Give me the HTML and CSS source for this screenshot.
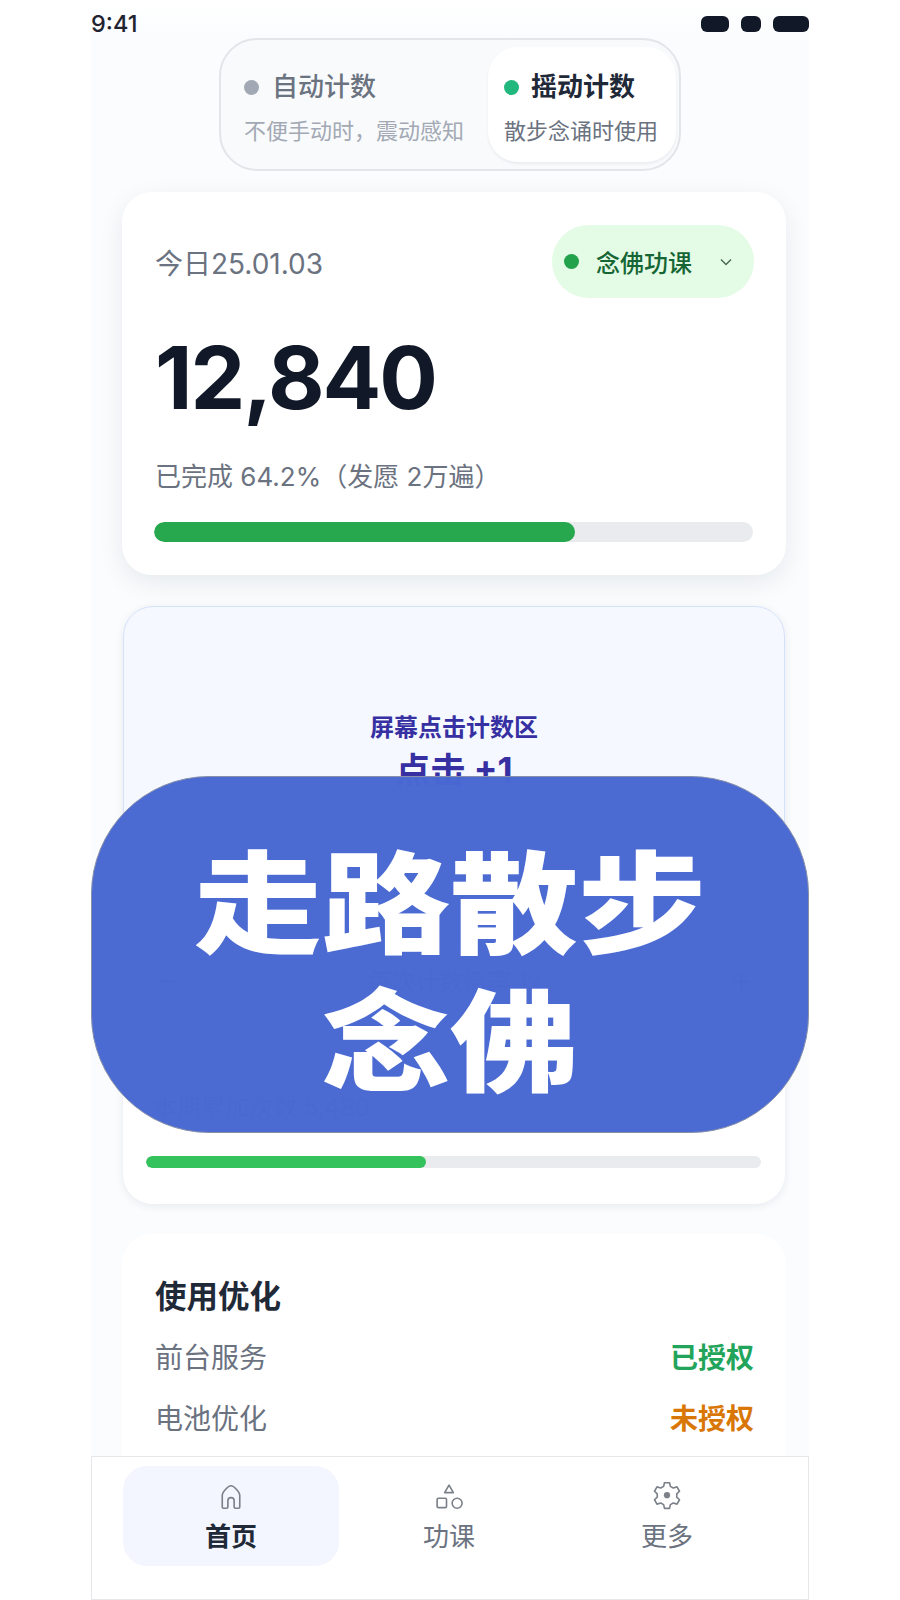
FILE: index.html
```html
<!DOCTYPE html>
<html lang="zh-CN">
<head>
    <meta charset="UTF-8">
    <meta name="viewport" content="width=device-width, initial-scale=1.0">
    <title>念佛计数</title>
    <link rel="stylesheet" href="styles.css">
</head>
<body>
    <div class="phone">

        <!-- Status bar -->
        <div class="status-bar">
            <span class="status-time">9:41</span>
            <div class="status-icons">
                <span class="status-block block-a"></span>
                <span class="status-block block-b"></span>
                <span class="status-block block-c"></span>
            </div>
        </div>

        <main class="content">
            <!-- Count mode switch -->
            <div class="mode-switch">
                <div class="mode-item">
                    <div class="mode-title"><span class="dot dot-grey"></span>自动计数</div>
                    <div class="mode-sub">不便手动时，震动感知</div>
                </div>
                <div class="mode-item mode-active">
                    <div class="mode-title"><span class="dot dot-teal"></span>摇动计数</div>
                    <div class="mode-sub">散步念诵时使用</div>
                </div>
            </div>

            <!-- Today -->
            <section class="card today-card">
                <div class="today-head">
                    <span class="today-date">今日25.01.03</span>
                    <div class="lesson-pill">
                        <span class="dot dot-green"></span>
                        <span class="lesson-name">念佛功课</span>
                        <svg class="chevron" viewBox="0 0 16 16"><path d="M3 5.5l5 5 5-5"/></svg>
                    </div>
                </div>
                <div class="today-count">12,840</div>
                <div class="today-note">已完成 64.2%（发愿 2万遍）</div>
                <div class="progress today-progress"><div class="progress-fill today-fill"></div></div>
            </section>

            <!-- Tap to count -->
            <section class="card tap-card">
                <div class="tap-zone">
                    <div class="tap-title">屏幕点击计数区</div>
                    <div class="tap-plus">点击 +1</div>
                </div>
                <div class="step-row">
                    <span class="step-btn">−</span>
                    <span class="step-label">每次计数倍率 1x</span>
                    <span class="step-btn">+</span>
                </div>
                <div class="tap-note">本期累加次数 5,480</div>
                <div class="progress tap-progress"><div class="progress-fill tap-fill"></div></div>
            </section>

            <!-- Permissions -->
            <section class="optimize">
                <h2 class="optimize-title">使用优化</h2>
                <div class="optimize-row"><span>前台服务</span><span class="state-ok">已授权</span></div>
                <div class="optimize-row"><span>电池优化</span><span class="state-no">未授权</span></div>
            </section>
        </main>

        <!-- Bottom tabs -->
        <nav class="tabbar">
            <div class="tab tab-active">
                <svg class="tab-icon" viewBox="0 0 24 24"><path d="M5 20V10.5C5 8.5 9.5 3 12 3s7 5.5 7 7.5V20c0 .6-.4 1-1 1h-2.5c-.6 0-1-.4-1-1v-5a2.5 2.5 0 0 0-5 0v5c0 .6-.4 1-1 1H6c-.6 0-1-.4-1-1z"/></svg>
                <span>首页</span>
            </div>
            <div class="tab">
                <svg class="tab-icon" viewBox="0 0 24 24"><path d="M12 2.5l3.5 6h-7z"/><rect x="2.500" y="13" width="7.500" height="7.500" rx="1"/><circle cx="18.500" cy="17" r="4"/></svg>
                <span>功课</span>
            </div>
            <div class="tab">
                <svg class="tab-icon" viewBox="0 2 24 24"><path d="M10 2.5h4l.7 3 2.3 1.3 3-.9 2 3.5-2.2 2.1v2.600l2.200 2.100-2 3.500-3-.9-2.300 1.300-.7 3h-4l-.7-3L7 18.800l-3 .9-2-3.500 2.200-2.100v-2.600L2 9.400l2-3.500 3 .9 2.300-1.300z"/><circle class="gear-dot" cx="12" cy="12.5" r="2.5"/></svg>
                <span>更多</span>
            </div>
        </nav>

        <!-- Caption over the page -->
        <div class="banner">
            <div class="banner-line">走路散步</div>
            <div class="banner-line">念佛</div>
        </div>
    </div>
</body>
</html>
```

FILE: styles.css
```css
* {
    box-sizing: border-box;
}
body {
    margin: 0;
    background-color: #fff;
    font-family: Inter, "Noto Sans CJK SC", sans-serif;
}
.phone {
    position: relative;
    width: 718px;
    height: 1600px;
    margin: 0 auto;
    background-color: #fafcfe;
    display: flex;
    flex-direction: column;
    overflow: hidden;
}

/* Status bar */
.status-bar {
    height: 38px;
    padding-top: 8px;
    display: flex;
    justify-content: space-between;
    align-items: flex-start;
    background: linear-gradient(#fff, #fafcfe);
}
.status-time {
    font-size: 23.5px;
    font-weight: 500;
    line-height: 32px;
    color: #1f2430;
}
.status-icons {
    display: flex;
    gap: 12px;
    padding-top: 8px;
}
.status-block {
    height: 16px;
    border-radius: 6px;
    background-color: #111827;
}
.block-a { width: 28px; }
.block-b { width: 20px; }
.block-c { width: 36px; }

.content {
    flex: 1;
    min-height: 0;
    padding: 0 0 0 31px;
    overflow: hidden;
}

/* Mode switch */
.mode-switch {
    width: 462px;
    height: 133px;
    margin: 0 0 21px 97px;
    padding: 7px 3px 7px 7px;
    display: flex;
    justify-content: space-between;
    background-color: #f8fafc;
    border: 2px solid #e3e5e9;
    border-radius: 38px;
}
.mode-item {
    padding: 24px 0 0 16px;
}
.mode-active {
    width: 188px;
    padding-left: 16px;
    background-color: #fff;
    border-radius: 30px;
    box-shadow: 0 2px 3px rgba(17, 24, 39, 0.06);
}
.mode-title {
    display: flex;
    align-items: center;
    gap: 13px;
    font-size: 26px;
    line-height: 32px;
    font-weight: 500;
    color: #6b7280;
}
.mode-active .mode-title {
    font-weight: 700;
    color: #1f2937;
    gap: 12px;
}
.mode-sub {
    margin-top: 13px;
    font-size: 22px;
    line-height: 30px;
    color: #a3a9b4;
    white-space: nowrap;
}
.mode-active .mode-sub {
    color: #6b7280;
}
.dot {
    width: 15px;
    height: 15px;
    border-radius: 50%;
    flex-shrink: 0;
}
.dot-grey { background-color: #a3a9b4; }
.dot-teal { background-color: #22b77c; }
.dot-green { background-color: #22a24a; }

/* Cards */
.card {
    width: 664px;
    background-color: #fff;
    border-radius: 30px;
}
.today-card {
    height: 383px;
    margin-bottom: 31px;
    padding: 33px 32px 0 33px;
    box-shadow: 0 8px 26px rgba(17, 24, 39, 0.08);
}
.today-head {
    display: flex;
    justify-content: space-between;
    align-items: center;
}
.today-date {
    font-size: 28px;
    color: #6b7280;
}
.lesson-pill {
    width: 202px;
    height: 73px;
    padding-left: 12px;
    display: flex;
    align-items: center;
    background-color: #e4fbe6;
    border-radius: 37px;
}
.lesson-name {
    margin-left: 17px;
    font-size: 24px;
    font-weight: 500;
    color: #166534;
}
.chevron {
    width: 16px;
    height: 16px;
    margin-left: 26px;
    fill: none;
    stroke: #4b6b57;
    stroke-width: 1.5;
}
.today-count {
    margin-top: 27px;
    font-size: 87px;
    line-height: 105px;
    font-weight: 700;
    letter-spacing: -2px;
    color: #111827;
}
.today-note {
    margin-top: 29px;
    font-size: 26px;
    line-height: 36px;
    color: #6b7280;
}
.progress {
    background-color: #e9ebee;
    overflow: hidden;
}
.progress-fill {
    height: 100%;
}
.today-progress {
    height: 20px;
    margin: 27px 1px 0 -1px;
    border-radius: 10px;
}
.today-fill {
    width: 70.3%;
    border-radius: 10px;
    background-color: #28a84e;
}

/* Tap card */
.tap-card {
    width: 662px;
    height: 598px;
    margin: 0 0 30px 1px;
    box-shadow: 0 2px 10px rgba(17, 24, 39, 0.08);
}
.tap-zone {
    height: 340px;
    padding-top: 105px;
    text-align: center;
    background-color: #f5f8ff;
    border: 1px solid #d5e0fb;
    border-radius: 30px;
}
.tap-title {
    font-size: 24px;
    line-height: 32px;
    font-weight: 700;
    color: #3730a3;
}
.tap-plus {
    margin-top: 3px;
    font-size: 35px;
    line-height: 46px;
    font-weight: 700;
    color: #3730a3;
}
.step-row {
    margin-top: 13px;
    padding: 0 32px;
    display: flex;
    justify-content: space-between;
    align-items: center;
    height: 40px;
    font-size: 24px;
    color: #6b7280;
}
.step-btn {
    font-size: 36px;
    line-height: 40px;
}
.tap-note {
    margin-top: 93px;
    padding-left: 30px;
    font-size: 24px;
    line-height: 32px;
    color: #6b7280;
}
.tap-progress {
    height: 12px;
    margin: 32px 24px 0 23px;
    border-radius: 6px;
}
.tap-fill {
    width: 45.5%;
    border-radius: 6px;
    background-color: #34c25c;
}

/* Permissions */
.optimize {
    width: 664px;
    height: 300px;
    padding: 40px 32px 0 33px;
    background-color: #fff;
    border-radius: 30px;
}
.optimize-title {
    margin: 0 0 17px;
    font-size: 31.5px;
    line-height: 46px;
    font-weight: 700;
    color: #1f2937;
}
.optimize-row {
    display: flex;
    justify-content: space-between;
    font-size: 28px;
    line-height: 42px;
    margin-bottom: 19px;
    color: #6b7280;
}
.state-ok {
    font-weight: 600;
    color: #22a55b;
}
.state-no {
    font-weight: 600;
    color: #d97706;
}

/* Tab bar */
.tabbar {
    height: 144px;
    padding: 9px 33px 0 31px;
    display: grid;
    grid-template-columns: repeat(3, 1fr);
    gap: 2px;
    align-items: start;
    background-color: #fff;
    border: 1px solid #e5e7eb;
}
.tab {
    height: 100px;
    display: flex;
    flex-direction: column;
    align-items: center;
    padding-top: 16px;
    font-size: 26px;
    line-height: 38px;
    color: #6b7280;
    border-radius: 24px;
}
.tab-active {
    font-weight: 700;
    color: #1f2937;
    background-color: #f3f6fe;
}
.tab-icon {
    width: 30px;
    height: 30px;
    margin-bottom: 6px;
    fill: none;
    stroke: #7b8089;
    stroke-width: 1.3;
    stroke-linejoin: round;
}
.gear-dot {
    fill: #7b8089;
    stroke: none;
}

/* Caption */
.banner {
    position: absolute;
    left: 0;
    top: 776px;
    width: 718px;
    height: 357px;
    padding-top: 51px;
    text-align: center;
    color: #fff;
    background-color: rgba(72, 105, 210, 0.985);
    border: 1px solid #8790a8;
    border-radius: 118px;
}
.banner-line {
    font-family: "Noto Sans CJK SC", sans-serif;
    font-size: 128px;
    line-height: 138px;
    font-weight: 900;
    transform: scaleY(0.87);
}
```
